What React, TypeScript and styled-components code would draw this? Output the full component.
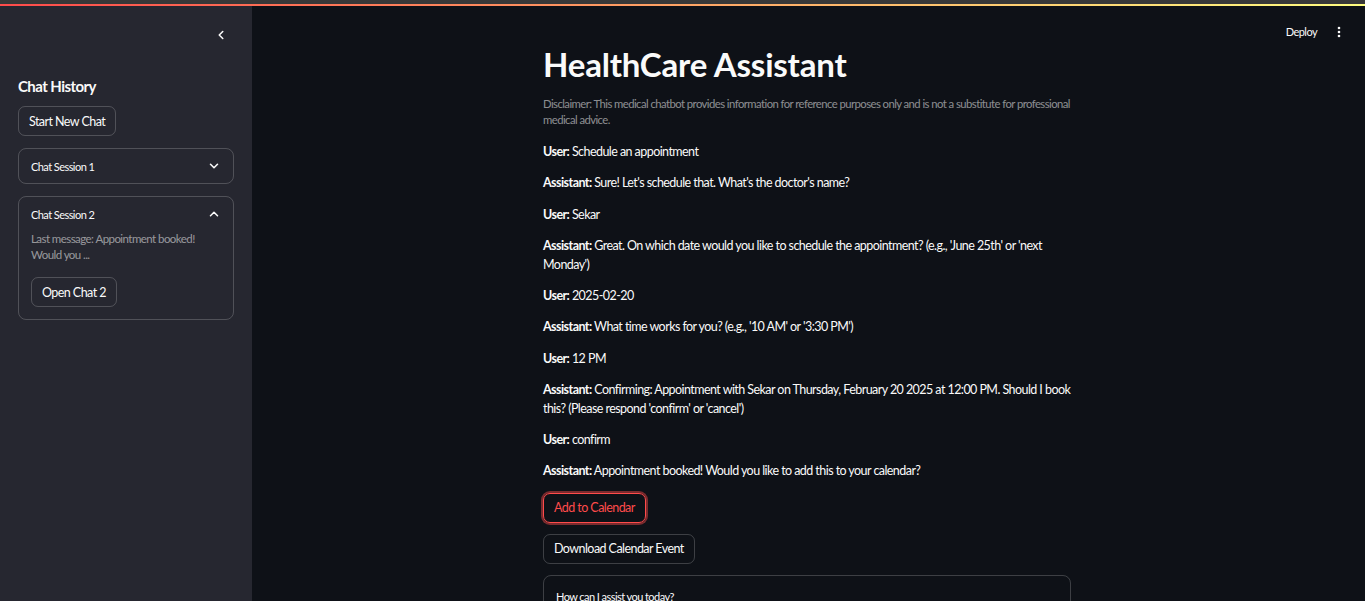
import styled, { createGlobalStyle } from 'styled-components';

const GlobalStyle = createGlobalStyle`
  html, body {
    margin: 0;
    padding: 0;
    background: #0e1117;
    overflow: hidden;
  }
  * {
    box-sizing: border-box;
  }
  body {
    font-family: Lato, 'Liberation Sans', sans-serif;
    letter-spacing: -0.035em;
    color: #fafafa;
  }
`;

const messages = [
  { role: 'User', text: 'Schedule an appointment' },
  { role: 'Assistant', text: "Sure! Let's schedule that. What's the doctor's name?" },
  { role: 'User', text: 'Sekar' },
  {
    role: 'Assistant',
    text: "Great. On which date would you like to schedule the appointment? (e.g., 'June 25th' or 'next Monday')",
  },
  { role: 'User', text: '2025-02-20' },
  { role: 'Assistant', text: "What time works for you? (e.g., '10 AM' or '3:30 PM')" },
  { role: 'User', text: '12 PM' },
  {
    role: 'Assistant',
    text: "Confirming: Appointment with Sekar on Thursday, February 20 2025 at 12:00 PM. Should I book this? (Please respond 'confirm' or 'cancel')",
  },
  { role: 'User', text: 'confirm' },
  { role: 'Assistant', text: 'Appointment booked! Would you like to add this to your calendar?' },
];

const Chevron = ({ dir }: { dir: 'down' | 'up' | 'left' }) => {
  const d = dir === 'down' ? 'M4 6l4 4 4-4' : dir === 'up' ? 'M4 10l4-4 4 4' : 'M10 4L6 8l4 4';
  return (
    <svg width='14' height='14' viewBox='0 0 16 16' fill='none'>
      <path d={d} stroke='#fafafa' strokeWidth='1.8' strokeLinecap='round' strokeLinejoin='round' />
    </svg>
  );
};

const App = () => {
  return (
    <>
      <GlobalStyle />
      <Frame>
        <TopStrip />
        <Decoration />
        <Layout>
          <Sidebar>
            <CollapseRow>
              <Chevron dir='left' />
            </CollapseRow>
            <SideTitle>Chat History</SideTitle>
            <Button>Start New Chat</Button>
            <Expander>
              <ExpanderHead>
                <span>Chat Session 1</span>
                <Chevron dir='down' />
              </ExpanderHead>
            </Expander>
            <Expander>
              <ExpanderHead>
                <span>Chat Session 2</span>
                <Chevron dir='up' />
              </ExpanderHead>
              <ExpanderBody>
                <Muted>
                  Last message: Appointment booked!
                  <br />
                  Would you ...
                </Muted>
                <Button $flush>Open Chat 2</Button>
              </ExpanderBody>
            </Expander>
          </Sidebar>
          <Main>
            <Toolbar>
              <DeployLink>Deploy</DeployLink>
              <svg width='4' height='12' viewBox='0 0 4 12'>
                <circle cx='2' cy='2' r='1.3' fill='#fafafa' />
                <circle cx='2' cy='6' r='1.3' fill='#fafafa' />
                <circle cx='2' cy='10' r='1.3' fill='#fafafa' />
              </svg>
            </Toolbar>
            <Column>
              <Title>HealthCare Assistant</Title>
              <Disclaimer>
                Disclaimer: This medical chatbot provides information for reference purposes only and is not a
                substitute for professional medical advice.
              </Disclaimer>
              {messages.map((m, i) => (
                <Message key={i}>
                  <b>{m.role}:</b> {m.text}
                </Message>
              ))}
              <Button $primary $gap={11}>
                Add to Calendar
              </Button>
              <Button $gap={11}>Download Calendar Event</Button>
              <ChatInput>How can I assist you today?</ChatInput>
            </Column>
          </Main>
        </Layout>
      </Frame>
    </>
  );
};

export default App;

const Frame = styled.div`
  height: 601px;
  display: flex;
  flex-direction: column;
`;

const TopStrip = styled.div`
  height: 4px;
  background: #383838;
`;

const Decoration = styled.div`
  height: 2px;
  background: linear-gradient(90deg, #ff4b4b, #fffd80);
`;

const Layout = styled.div`
  flex: 1;
  display: flex;
  min-height: 0;
`;

const Sidebar = styled.aside`
  width: 252px;
  flex-shrink: 0;
  background: #262730;
  padding: 22px 18px 0;
  display: flex;
  flex-direction: column;
  align-items: flex-start;
`;

const CollapseRow = styled.div`
  align-self: stretch;
  display: flex;
  justify-content: flex-end;
  padding-right: 6px;
  margin-bottom: 33px;
`;

const SideTitle = styled.h3`
  margin: 0 0 9px;
  font-size: 15px;
  font-weight: 700;
  line-height: 22px;
`;

const Button = styled.button<{ $primary?: boolean; $flush?: boolean; $gap?: number }>`
  font-family: inherit;
  letter-spacing: inherit;
  font-size: 12.5px;
  line-height: 17px;
  padding: 5.5px 10px;
  border-radius: 7px;
  background: transparent;
  color: ${({ $primary }) => ($primary ? '#ff4b4b' : '#fafafa')};
  border: 1px solid ${({ $primary }) => ($primary ? '#ff4b4b' : 'rgba(250, 250, 250, 0.2)')};
  box-shadow: ${({ $primary }) => ($primary ? '0 0 0 2px rgba(255, 75, 75, 0.45)' : 'none')};
  margin-bottom: ${({ $flush, $gap = 12 }) => ($flush ? 0 : $gap)}px;
  cursor: pointer;
`;

const Expander = styled.div`
  align-self: stretch;
  border: 1px solid rgba(250, 250, 250, 0.2);
  border-radius: 8px;
  margin-bottom: 12px;
`;

const ExpanderHead = styled.div`
  height: 34px;
  display: flex;
  align-items: center;
  justify-content: space-between;
  padding: 0 12px;
  font-size: 11px;
`;

const ExpanderBody = styled.div`
  padding: 0 12px 12px;
`;

const Muted = styled.p`
  margin: 0 0 14px;
  font-size: 11.5px;
  line-height: 16px;
  color: rgba(250, 250, 250, 0.55);
`;

const Main = styled.main`
  flex: 1;
  position: relative;
  display: flex;
  justify-content: center;
  padding-right: 3px;
`;

const Toolbar = styled.div`
  position: absolute;
  top: 19px;
  right: 24px;
  display: flex;
  align-items: center;
  gap: 20px;
`;

const DeployLink = styled.span`
  font-size: 11px;
  color: #fafafa;
`;

const Column = styled.div`
  width: 528px;
  padding-top: 38px;
  display: flex;
  flex-direction: column;
  align-items: flex-start;
`;

const Title = styled.h1`
  margin: 0 0 12px;
  font-size: 33px;
  letter-spacing: -0.2px;
  font-weight: 700;
  line-height: 40px;
`;

const Disclaimer = styled.p`
  margin: 0 0 14px;
  font-size: 11.3px;
  line-height: 16px;
  color: rgba(250, 250, 250, 0.55);
`;

const Message = styled.p`
  margin: 0 0 12.25px;
  font-size: 12.5px;
  line-height: 19px;
  b {
    font-weight: 700;
  }
`;

const ChatInput = styled.div`
  align-self: stretch;
  height: 60px;
  border: 1px solid rgba(250, 250, 250, 0.2);
  border-radius: 8px;
  padding: 14px 12px;
  font-size: 11px;
  line-height: 13px;
  color: #fafafa;
`;
